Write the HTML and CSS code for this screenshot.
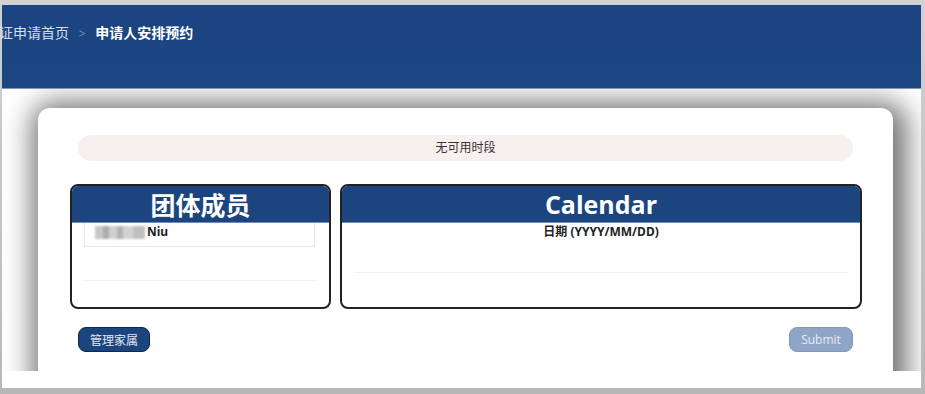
FILE: index.html
```html
<!DOCTYPE html>
<html lang="zh-CN">

<head>
    <meta charset="UTF-8">
    <meta name="viewport" content="width=device-width, initial-scale=1.0">
    <title>申请人安排预约</title>
    <link rel="stylesheet" href="styles.css">
</head>

<body>
    <div class="frame">
        <div class="topbar">
            <div class="breadcrumb">
                <span class="crumb-link">证申请首页</span>
                <span class="crumb-sep">&gt;</span>
                <span class="crumb-current">申请人安排预约</span>
            </div>
        </div>

        <div class="main">
            <div class="card">
                <div class="alert">无可用时段</div>

                <div class="panels">
                    <div class="panel">
                        <div class="panel-title">团体成员</div>
                        <div class="panel-body">
                            <div class="member-row">
                                <span class="blurred"></span><b>Niu</b>
                            </div>
                            <hr class="divider divider-members">
                        </div>
                    </div>
                    <div class="panel">
                        <div class="panel-title title-latin">Calendar</div>
                        <div class="panel-body">
                            <div class="date-label">日期 (YYYY/MM/DD)</div>
                            <hr class="divider divider-dates">
                        </div>
                    </div>
                </div>

                <div class="actions">
                    <button class="btn btn-family">管理家属</button>
                    <button class="btn btn-submit" disabled>Submit</button>
                </div>
            </div>
        </div>
        <div class="bottom-space"></div>
    </div>
</body>

</html>
```

FILE: styles.css
```css
* {
    box-sizing: border-box;
}
body {
    margin: 0;
    height: 394px;
    overflow: hidden;
    background: linear-gradient(#d2d2d2, #b8b8b8);
    font-family: "Noto Sans", "Noto Sans CJK SC", sans-serif;
}
.frame {
    margin: 5px 4px 0 2px;
    height: 383px;
    background-color: #fff;
    display: flex;
    flex-direction: column;
}

/* top bar */
.topbar {
    height: 84px;
    flex-shrink: 0;
    background: linear-gradient(#1b4480, #1c4682);
    border-bottom: 1px solid #8096b8;
    padding-top: 18px;
}
.breadcrumb {
    font-size: 14px;
    line-height: 20px;
    margin-left: -3px;
}
.crumb-link {
    color: #d6dcea;
}
.crumb-sep {
    color: #7d8ead;
    margin: 0 6px;
    font-size: 12px;
}
.crumb-current {
    color: #fff;
    font-weight: bold;
}

/* main area */
.main {
    height: 282px;
    flex-shrink: 0;
    overflow: hidden;
    padding: 19px 28px 0 36px;
    background-color: #fff;
}
.card {
    height: 320px;
    background-color: #fff;
    border-radius: 12px;
    box-shadow: 4px 4px 28px 10px rgba(0, 0, 0, 0.55);
    padding-top: 27px;
}
.alert {
    margin: 0 40px;
    height: 26px;
    line-height: 26px;
    border-radius: 13px;
    background-color: #f8efef;
    color: #333;
    font-size: 12px;
    text-align: center;
}

/* panels */
.panels {
    display: grid;
    grid-template-columns: 261fr 522fr;
    gap: 9px;
    margin-top: 23px;
    padding: 0 31px 0 32px;
}
.panel {
    height: 125px;
    border: 2px solid #222;
    border-radius: 8px;
    overflow: hidden;
}
.panel-title {
    height: 37px;
    background-color: #1c4580;
    border-bottom: 1px solid #6f8cbc;
    color: #fff;
    font-family: "Noto Sans CJK SC", sans-serif;
    font-weight: bold;
    font-size: 25px;
    line-height: 36px;
    text-align: center;
}
.title-latin {
    font-family: "Open Sans", "Noto Sans", sans-serif;
    font-size: 25px;
}
.panel-body {
    padding: 0 12px;
}
.member-row {
    height: 24px;
    border: 1px solid #e6e6e6;
    border-top: none;
    margin-right: 2px;
    padding-left: 10px;
    font-size: 12px;
    line-height: 18px;
    color: #222;
    display: flex;
    align-items: flex-start;
}
.blurred {
    display: inline-block;
    width: 50px;
    height: 13px;
    margin-top: 3px;
    background:
        linear-gradient(90deg, #bbb 0 8px, #999 8px 14px, #c4c4c4 14px 22px, #a0a0a0 22px 28px, #c8c8c8 28px 38px, #b0b0b0 38px 50px);
    filter: blur(1.2px);
    opacity: 0.8;
}
.member-row b {
    margin-left: 2px;
}
.divider {
    border: none;
    border-top: 1px solid #f0f0f0;
    margin: 0;
}
.divider-members {
    margin-top: 33px;
    margin-left: -1px;
}
.date-label {
    font-size: 12px;
    font-weight: bold;
    line-height: 18px;
    color: #222;
    text-align: center;
}
.divider-dates {
    margin-top: 31px;
}

/* buttons */
.actions {
    display: flex;
    justify-content: space-between;
    margin-top: 18px;
    padding: 0 40px;
}
.btn {
    height: 25px;
    border-radius: 8px;
    font-size: 12px;
    padding: 0 10px;
}
.btn-family {
    width: 72px;
    background-color: #1c4580;
    border: 1px solid #10274a;
    color: #e4e8f0;
    font-family: "Noto Sans CJK SC", serif;
}
.btn-submit {
    width: 64px;
    background-color: #8fa5c8;
    border: 1px solid #8198bd;
    color: #e6ecf4;
    font-family: "Open Sans", sans-serif;
}
.bottom-space {
    flex: 1;
    background-color: #fff;
}
```
